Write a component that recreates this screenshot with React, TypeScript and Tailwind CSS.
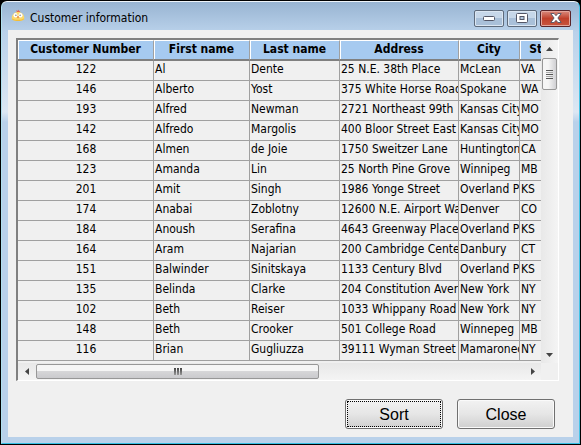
import React from "react";

type Customer = [string, string, string, string, string, string];

const columns: { label: string; width: string }[] = [
  { label: "Customer Number", width: "w-[136px]" },
  { label: "First name", width: "w-[96px]" },
  { label: "Last name", width: "w-[90px]" },
  { label: "Address", width: "w-[119px]" },
  { label: "City", width: "w-[61px]" },
  { label: "State", width: "w-[52px]" },
];

const customers: Customer[] = [
  ["122", "Al", "Dente", "25 N.E. 38th Place", "McLean", "VA"],
  ["146", "Alberto", "Yost", "375 White Horse Road", "Spokane", "WA"],
  ["193", "Alfred", "Newman", "2721 Northeast 99th", "Kansas City", "MO"],
  ["142", "Alfredo", "Margolis", "400 Bloor Street East", "Kansas City", "MO"],
  ["168", "Almen", "de Joie", "1750 Sweitzer Lane", "Huntington", "CA"],
  ["123", "Amanda", "Lin", "25 North Pine Grove", "Winnipeg", "MB"],
  ["201", "Amit", "Singh", "1986 Yonge Street", "Overland Park", "KS"],
  ["174", "Anabai", "Zoblotny", "12600 N.E. Airport Way", "Denver", "CO"],
  ["184", "Anoush", "Serafina", "4643 Greenway Place", "Overland Park", "KS"],
  ["164", "Aram", "Najarian", "200 Cambridge Center", "Danbury", "CT"],
  ["151", "Balwinder", "Sinitskaya", "1133 Century Blvd", "Overland Park", "KS"],
  ["135", "Belinda", "Clarke", "204 Constitution Avenue", "New York", "NY"],
  ["102", "Beth", "Reiser", "1033 Whippany Road", "New York", "NY"],
  ["148", "Beth", "Crooker", "501 College Road", "Winnepeg", "MB"],
  ["116", "Brian", "Gugliuzza", "39111 Wyman Street", "Mamaroneck", "NY"],
];

function AppIcon() {
  return (
    <svg width="14" height="14" viewBox="0 0 14 14" aria-hidden="true">
      <path d="M6 3.500 5.300 1l1.500 1L7.300.5l.8 1.700 1.200-.5-.8 2z" fill="#e8664a" />
      <path d="M.7 9.500C.7 5.500 3.200 3 7 3s6.300 2.500 6.300 6.500c0 1.600-2.500 2.300-6.300 2.300S.7 11.100.7 9.500z" fill="#fbd86a" />
      <path d="M1 9.300c1 1.200 3 1.500 6 1.500s5-.3 6-1.500c.2 1.800-2.300 2.700-6 2.700s-6.200-.9-6-2.700z" fill="#f3bd36" />
      <ellipse cx="4.500" cy="6.300" rx="2" ry="2.200" fill="#fff" />
      <ellipse cx="9.500" cy="6.300" rx="2" ry="2.200" fill="#fff" />
      <circle cx="4.900" cy="6.300" r=".7" fill="#777" />
      <circle cx="9.100" cy="6.300" r=".7" fill="#777" />
      <path d="m6 8 1-1 1 1-1 1.500z" fill="#e67844" />
    </svg>
  );
}

function TitleBar() {
  const plain =
    "flex h-[17px] w-[30px] items-center justify-center rounded-[2px] border border-[#5e6b7c] bg-linear-to-b from-[#c6d7e9] from-50% to-[#a9c0d9] to-50% shadow-[inset_0_0_0_1px_#dbe6f2]";
  return (
    <header className="flex h-[28px] shrink-0 items-center pl-[9px] pr-2">
      <AppIcon />
      <h1 className="ml-[5px] flex-1 pt-1 text-[12px] leading-4">Customer information</h1>
      <div className="flex gap-[3px] pt-1">
        <button type="button" aria-label="Minimize" className={plain}>
          <svg width="12" height="6" viewBox="0 0 12 6">
            <rect x=".5" y="1.500" width="11" height="4" rx="1" fill="#fff" stroke="#535666" />
          </svg>
        </button>
        <button type="button" aria-label="Maximize" className={plain}>
          <svg width="12" height="10" viewBox="0 0 12 10">
            <rect x=".5" y=".5" width="11" height="9" rx="1" fill="#fff" stroke="#535666" />
            <rect x="4" y="3.500" width="4" height="3" fill="#b5c9de" stroke="#535666" />
          </svg>
        </button>
        <button
          type="button"
          aria-label="Close window"
          className="flex h-[17px] w-[31px] items-center justify-center rounded-[2px] border border-[#5a2429] bg-linear-to-b from-[#d98a7e] via-[#c0402b] via-50% to-[#c8553f] shadow-[inset_0_0_0_1px_#e3a59b]"
        >
          <svg width="12" height="10" viewBox="0 0 12 10">
            <path d="M.8.5h3.300L6 2.700 7.900.5h3.300L7.900 5l3.300 4.500H7.900L6 7.300 4.100 9.500H.8L4.100 5z" fill="#fff" stroke="#535666" strokeWidth=".9" strokeLinejoin="round" />
          </svg>
        </button>
      </div>
    </header>
  );
}

function CustomerTable() {
  return (
    <table className="w-[554px] table-fixed border-separate border-spacing-0 text-[12px] leading-4">
      <thead>
        <tr>
          {columns.map((c) => (
            <th
              key={c.label}
              scope="col"
              className={`${c.width} h-[21px] overflow-hidden border-t border-r border-b-2 border-t-white border-r-[#a0a0a0] border-b-[#808080] bg-[#a6caf0] px-0 pt-0 pb-[2px] text-center font-bold whitespace-nowrap shadow-[inset_1px_0_0_#fff]`}
            >
              {c.label}
            </th>
          ))}
        </tr>
      </thead>
      <tbody>
        {customers.map((row) => (
          <tr key={row[0]}>
            {row.map((value, i) => (
              <td
                key={i}
                className={`h-5 overflow-hidden border-r border-b border-[#a0a0a0] pt-0 pr-0 pb-[3px] whitespace-nowrap ${
                  i === 0 ? "pl-px text-center" : "pl-px text-left"
                }`}
              >
                {value}
              </td>
            ))}
          </tr>
        ))}
      </tbody>
    </table>
  );
}

const arrows = {
  up: "M0 4 3.500 0 7 4z",
  down: "M0 0h7L3.500 4z",
  left: "M4 0v7L0 3.500z",
  right: "M0 0v7l4-3.500z",
};

function ArrowButton({ dir }: { dir: keyof typeof arrows }) {
  const vertical = dir === "up" || dir === "down";
  return (
    <button type="button" aria-label={`Scroll ${dir}`} className="flex size-[17px] shrink-0 items-center justify-center">
      <svg width={vertical ? 7 : 4} height={vertical ? 4 : 7}>
        <path d={arrows[dir]} fill="#444" />
      </svg>
    </button>
  );
}

function VerticalScrollBar() {
  return (
    <div className="flex w-[17px] shrink-0 flex-col bg-linear-to-r from-[#e8e8e8] to-[#f4f4f4]">
      <ArrowButton dir="up" />
      <div className="flex-1 px-px pt-px">
        <div className="flex h-[32px] flex-col items-center justify-center gap-px rounded-[2px] border border-[#979797] bg-linear-to-r from-[#f5f5f5] from-40% to-[#d0d0d3]">
          <span className="h-px w-[7px] bg-[#555]" />
          <span className="h-px w-[7px] bg-[#aaa]" />
          <span className="h-px w-[7px] bg-[#555]" />
          <span className="h-px w-[7px] bg-[#aaa]" />
          <span className="h-px w-[7px] bg-[#555]" />
        </div>
      </div>
      <ArrowButton dir="down" />
    </div>
  );
}

function HorizontalScrollBar() {
  return (
    <div className="mr-[17px] flex h-[17px] items-stretch bg-linear-to-b from-[#e8e8e8] to-[#f4f4f4]">
      <ArrowButton dir="left" />
      <div className="flex flex-1 py-px pl-px">
        <div className="flex w-[58%] items-center justify-center gap-px rounded-[2px] border border-[#979797] bg-linear-to-b from-[#f5f5f5] from-45% via-[#d6d6d8] via-50% to-[#cacacd]">
          <span className="h-[7px] w-[2px] bg-linear-to-b from-[#444] to-[#999]" />
          <span className="h-[7px] w-[2px] bg-linear-to-b from-[#444] to-[#999]" />
          <span className="h-[7px] w-[2px] bg-linear-to-b from-[#444] to-[#999]" />
        </div>
      </div>
      <ArrowButton dir="right" />
    </div>
  );
}

function ActionButton({ label, focused = false }: { label: string; focused?: boolean }) {
  return (
    <button
      type="button"
      className="h-[30px] w-[98px] rounded-[3px] border border-[#707070] bg-linear-to-b from-[#f2f2f2] from-0% via-[#e6e6e6] via-50% to-[#cfcfcf] p-px font-['Liberation_Sans',Arial,sans-serif] text-[16px] leading-5 shadow-[inset_0_0_0_1px_#fafafa]"
    >
      <span
        className={`flex h-full items-center justify-center border border-dotted pt-px ${
          focused ? "border-black" : "border-transparent"
        }`}
      >
        {label}
      </span>
    </button>
  );
}

export default function App() {
  return (
    <div className="flex min-h-screen flex-col bg-black p-px font-['DejaVu_Sans_Condensed','DejaVu_Sans',Tahoma,sans-serif] text-black">
      <div className="flex flex-1 flex-col rounded-t-[6px] border border-t-[#eef4fa] border-r-[#45c4e6] border-b-[#35c0e4] border-l-[#b0e0ee] bg-[linear-gradient(to_bottom,#98b4d2_0px,#b9d1ea_30px,#dce7f3_110px,#b9d1ea_120px)]">
        <TitleBar />
        <main className="mx-[6px] mb-[6px] flex flex-1 flex-col bg-[#f0f0f0] px-2 pt-2">
          <div className="mr-[6px] border-t-2 border-l-2 border-r border-b border-t-[#808080] border-l-[#808080] border-r-white border-b-white">
            <div className="flex">
              <div className="min-w-0 flex-1 overflow-hidden pb-[2px]">
                <CustomerTable />
              </div>
              <VerticalScrollBar />
            </div>
            <HorizontalScrollBar />
          </div>
          <div className="mt-[18px] mr-[10px] mb-2 flex justify-end gap-[14px]">
            <ActionButton label="Sort" focused />
            <ActionButton label="Close" />
          </div>
        </main>
      </div>
    </div>
  );
}
